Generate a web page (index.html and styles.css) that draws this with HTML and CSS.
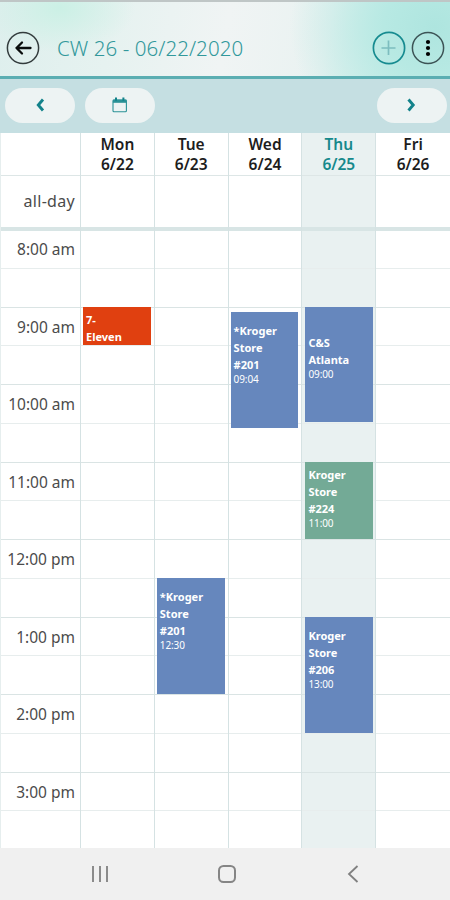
FILE: index.html
```html
<!DOCTYPE html>
<html lang="en">
<head>
    <meta charset="UTF-8">
    <meta name="viewport" content="width=device-width, initial-scale=1.0">
    <title>Calendar</title>
    <link rel="stylesheet" href="styles.css">
</head>
<body>
    <div class="screen">
        <header class="header">
            <svg class="round-icon" viewBox="0 0 34 34">
                <circle cx="17" cy="17" r="15.6" fill="none" stroke="#333c3d" stroke-width="1.5"/>
                <path d="M24.5 17h-14M16 11.5L10.5 17l5.5 5.5" fill="none" stroke="#0a0d0d" stroke-width="2.3" stroke-linecap="round" stroke-linejoin="round"/>
            </svg>
            <h1 class="title">CW 26 - 06/22/2020</h1>
            <svg class="round-icon" viewBox="0 0 34 34">
                <circle cx="17" cy="17" r="15.6" fill="none" stroke="#168b90" stroke-width="1.7"/>
                <path d="M16.5 9.5V24M9.5 17h14" fill="none" stroke="#7cbdbf" stroke-width="1.7"/>
            </svg>
            <svg class="round-icon last" viewBox="0 0 34 34">
                <circle cx="17" cy="17" r="15.6" fill="none" stroke="#3c5355" stroke-width="1.5"/>
                <circle cx="17" cy="11" r="2.1"/>
                <circle cx="17" cy="17" r="2.1"/>
                <circle cx="17" cy="23" r="2.1"/>
            </svg>
        </header>

        <div class="toolbar">
            <button class="pill"><svg width="18" height="18" viewBox="0 0 18 18"><path d="M12 3.5L7.3 9l4.7 5.5" fill="none" stroke="#12828a" stroke-width="2.9"/></svg></button>
            <button class="pill">
                <svg width="18" height="18" viewBox="0 0 18 18">
                    <rect x="2" y="4" width="13.4" height="11.8" rx="1" fill="none" stroke="#2b9297" stroke-width="1.1"/>
                    <path d="M1.9 3.6h13.6v3.2H1.9z" fill="#2b9297"/>
                    <path d="M5 1.5v3.200M12.400 1.5v3.2" stroke="#12828a" stroke-width="2"/>
                </svg>
            </button>
            <button class="pill next"><svg width="18" height="18" viewBox="0 0 18 18"><path d="M5.5 3.5l4.7 5.5-4.7 5.5" fill="none" stroke="#12828a" stroke-width="2.9"/></svg></button>
        </div>

        <main class="calendar">
            <div class="col times">
                <div class="day-head"></div>
                <div class="all-day"><span>all-day</span></div>
                <div class="slots" id="times"></div>
            </div>
            <div class="col">
                <div class="day-head">Mon<br>6/22</div>
                <div class="all-day"></div>
                <div class="slots day">
                    <div class="event red" data-start="9" data-end="9.5"><b>7-<br>Eleven</b></div>
                </div>
            </div>
            <div class="col">
                <div class="day-head">Tue<br>6/23</div>
                <div class="all-day"></div>
                <div class="slots day">
                    <div class="event" data-start="12.5" data-end="14"><b>*Kroger<br>Store<br>#201</b><span>12:30</span></div>
                </div>
            </div>
            <div class="col">
                <div class="day-head">Wed<br>6/24</div>
                <div class="all-day"></div>
                <div class="slots day">
                    <div class="event" data-start="9.067" data-end="10.567"><b>*Kroger<br>Store<br>#201</b><span>09:04</span></div>
                </div>
            </div>
            <div class="col today">
                <div class="day-head">Thu<br>6/25</div>
                <div class="all-day"></div>
                <div class="slots day">
                    <div class="event spaced" data-start="9" data-end="10.5"><b>C&amp;S<br>Atlanta</b><span>09:00</span></div>
                    <div class="event green" data-start="11" data-end="12"><b>Kroger<br>Store<br>#224</b><span>11:00</span></div>
                    <div class="event" data-start="13" data-end="14.5"><b>Kroger<br>Store<br>#206</b><span>13:00</span></div>
                </div>
            </div>
            <div class="col">
                <div class="day-head">Fri<br>6/26</div>
                <div class="all-day"></div>
                <div class="slots day"></div>
            </div>
        </main>

        <nav class="navbar">
            <svg width="22" height="22" viewBox="0 0 22 22"><path d="M4 3v16M11 3v16M18 3v16" stroke="#8b8b8b" stroke-width="2"/></svg>
            <svg width="22" height="22" viewBox="0 0 22 22"><rect x="3" y="3" width="16" height="16" rx="4.5" fill="none" stroke="#858585" stroke-width="2"/></svg>
            <svg width="22" height="22" viewBox="0 0 22 22"><path d="M15.5 3L7 11l8.5 8" fill="none" stroke="#808080" stroke-width="1.8"/></svg>
        </nav>
    </div>
    <script src="calendar.js"></script>
</body>
</html>
```

FILE: styles.css
```css
* {
    box-sizing: border-box;
}
body {
    margin: 0;
    font-family: "Noto Sans", "Open Sans", sans-serif;
    background: #fff;
}
.screen {
    width: 450px;
    height: 900px;
    display: flex;
    flex-direction: column;
    overflow: hidden;
}
.header {
    height: 79px;
    flex: none;
    display: flex;
    align-items: center;
    padding: 17px 5px 0 6px;
    border-top: 2px solid #bfc6c6;
    border-bottom: 3px solid #5baeb2;
    background:
        radial-gradient(ellipse 75px 45px at 60px 6px, #cbf0e5, rgba(203, 240, 229, 0)),
        radial-gradient(ellipse 145px 130px at 435px 25px, #aee5df 0%, #b7e9e3 35%, rgba(190, 236, 230, 0) 100%),
        linear-gradient(100deg, #deefed 0%, #e6f2f0 25%, #f0f4f4 50%, #e9f2f1 72%, #c2eee8 100%);
}
.round-icon {
    width: 34px;
    height: 34px;
    flex: none;
}
.round-icon.last {
    margin-left: 5px;
}
.title {
    flex: 1;
    margin: 0 0 0 17px;
    font-size: 20.5px;
    font-weight: 300;
    line-height: 28px;
    letter-spacing: 0.06px;
    white-space: nowrap;
    color: #31989b;
}
.toolbar {
    height: 54px;
    flex: none;
    display: flex;
    gap: 10px;
    padding: 9px 3px 0 5px;
    background: #c5dfe2;
}
.pill {
    width: 70px;
    height: 35px;
    padding: 0;
    border: 0;
    border-radius: 18px;
    background: #edf3f3;
    display: flex;
    align-items: center;
    justify-content: center;
}
.pill svg {
    margin-top: -2px;
}
.pill.next {
    margin-left: auto;
}
.calendar {
    flex: 1;
    min-height: 0;
    display: grid;
    grid-template-columns: 81px repeat(5, 73.8px);
    overflow: hidden;
}
.col {
    border-right: 1px solid #d5e2e3;
}
.col:last-child {
    border-right: 0;
}
.times {
    border-left: 1px solid #e6eeee;
}
.today {
    background: #e9f1f1;
}
.day-head {
    height: 43px;
    padding-top: 1px;
    border-bottom: 1px solid #dde6e6;
    text-align: center;
    font-size: 15.5px;
    font-weight: 600;
    line-height: 20px;
    color: #1d1d1d;
}
.today .day-head {
    color: #16898c;
}
.all-day {
    height: 55px;
    border-bottom: 4px solid #d8e5e5;
    font-size: 16px;
    line-height: 50px;
    letter-spacing: 0.3px;
    text-align: right;
    padding-right: 5px;
    color: #4b4b4b;
}
.slots {
    position: relative;
    margin-top: -1px;
}
.slot {
    height: 38.78px;
    border-bottom: 1px solid #e7eded;
    padding-right: 5px;
    text-align: right;
    white-space: nowrap;
    font-size: 15.5px;
    line-height: 38px;
    color: #4b4b4b;
}
.slot:nth-child(even) {
    border-bottom-color: #dae4e4;
}
/* events lie over the half hour slots of their day */
.event {
    position: absolute;
    left: 2px;
    right: 3px;
    padding: 10px 3px 0;
    overflow: hidden;
    background: #6687bd;
    color: #fff;
    font-size: 11px;
    line-height: 17px;
}
.event b {
    display: block;
    font-weight: 700;
}
.event span {
    display: block;
    font-size: 10px;
    line-height: 12px;
    letter-spacing: -0.1px;
}
.event.spaced {
    padding-top: 27px;
}
.event.red {
    background: #e04010;
    padding-top: 4px;
}
.event.green {
    background: #73aa96;
    padding-top: 4px;
}
.today .event {
    left: 3px;
    right: 2px;
}
.navbar {
    height: 52px;
    flex: none;
    display: flex;
    justify-content: space-between;
    align-items: center;
    padding: 0 86px 0 89px;
    background: #f0f0f0;
}
```

FILE: calendar.js
```javascript
const firstHour = 8;
const slotHeight = 38.78;

const times = document.getElementById('times');
for (let i = 0; i < 16; i++) {
    const slot = document.createElement('div');
    slot.className = 'slot';
    if (i % 2 === 0) {
        const hour = firstHour + i / 2;
        slot.textContent = (hour > 12 ? hour - 12 : hour) + ':00 ' + (hour < 12 ? 'am' : 'pm');
    }
    times.appendChild(slot);
}

document.querySelectorAll('.day').forEach(day => {
    const events = day.querySelectorAll('.event');
    for (let i = 0; i < 16; i++) {
        const slot = document.createElement('div');
        slot.className = 'slot';
        day.insertBefore(slot, events[0] || null);
    }
    events.forEach(event => {
        // start on the hour line itself
        const start = (event.dataset.start - firstHour) * 2 * slotHeight - 1;
        const end = (event.dataset.end - firstHour) * 2 * slotHeight - 1;
        event.style.top = start + 'px';
        event.style.height = end - start - 0.5 + 'px';
    });
});
```
